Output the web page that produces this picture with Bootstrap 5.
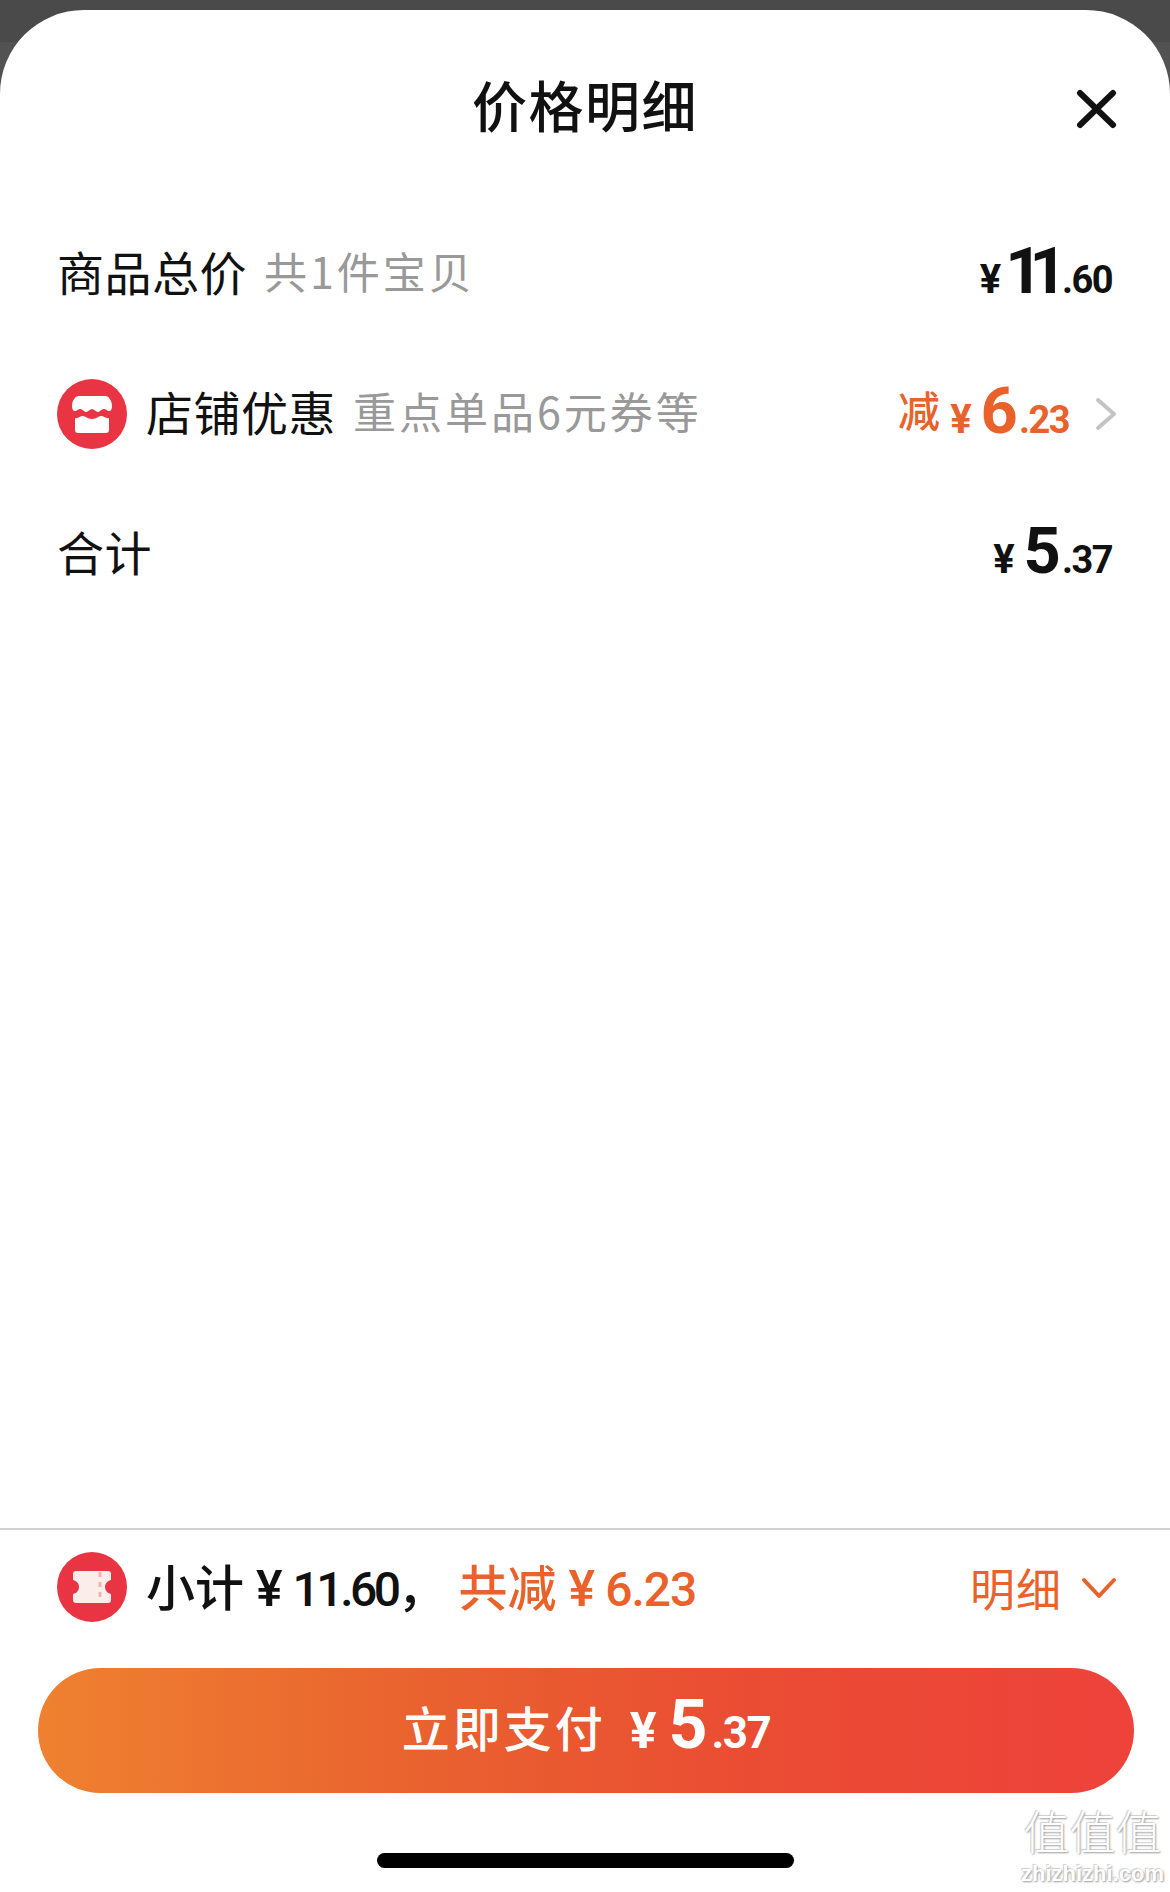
<!DOCTYPE html>
<html lang="zh-CN">
<head>
  <meta charset="UTF-8" />
  <meta name="viewport" content="width=device-width, initial-scale=1.0"/>
  <title>价格明细</title>
  <link href="https://cdn.jsdelivr.net/npm/bootstrap@5.3.3/dist/css/bootstrap.min.css" rel="stylesheet">
  <style>
    html, body { height: 100%; }
    body {
      margin: 0;
      padding-top: 10px;
      background: linear-gradient(#4a4a4a 42px, #525252 42px);
      font-family: "Noto Sans CJK SC", "Liberation Sans", sans-serif;
      color: #111;
      overflow: hidden;
    }
    .sheet {
      position: relative;
      height: 1882px;
      background: #fff;
      border-radius: 84px 84px 0 0 / 84px 84px 0 0;
    }
    .sheet-head { height: 194px; padding-top: 50px; }
    .sheet-title { font-size: 55px; font-weight: 500; line-height: 86px; margin: 0; letter-spacing: 1.5px; }
    .close-x { position: absolute; top: 78px; right: 52px; width: 42px; height: 42px; }
    .price-row { height: 140px; padding: 0 58px 0 57px; font-size: 47px; line-height: 1; }
    .price-row .label { letter-spacing: .5px; padding-bottom: 7px; }
    .hint { color: #999; margin-left: 17px; font-size: 43px; letter-spacing: 3px; padding-bottom: 7px; }
    .round-icon { width: 70px; height: 70px; flex: none; margin-right: 19px; }
    .amount { font-family: Roboto, "Noto Sans CJK SC", sans-serif; font-weight: 700; display: flex; align-items: baseline; padding-bottom: 5px; }
    .yen { font-size: 40px; margin-right: 4px; }
    .yen-wide { margin-right: 9px; }
    .big { font-size: 65px; letter-spacing: -13px; margin-right: 8px; line-height: 1; }
    .single { letter-spacing: 0; margin-right: 1px; }
    .cents { font-size: 38px; letter-spacing: -1.5px; }
    .cut { color: #e9622b; }
    .cut-word { font-family: "Noto Sans CJK SC", sans-serif; font-size: 42px; margin-right: 10px; font-weight: 500; transform: translateY(-6px); }
    .chev { width: 24px; height: 36px; margin: 0 -6px 0 25px; }
    .foot-bar { border-top: 2px solid #d2d2d2; padding: 22px 58px 0 57px; height: 140px; }
    .foot-text { font-size: 49px; font-weight: 500; line-height: 1; }
    .foot-word { padding-bottom: 1px; }
    .foot-saved { margin-left: 12px; }
    .foot-yen { font-family: Roboto, sans-serif; font-size: 50px; margin: 0 10px 0 12px; }
    .num { font-family: Roboto, sans-serif; font-size: 48px; letter-spacing: -1px; }
    .num-tight { letter-spacing: -3.5px; }
    .detail-link { color: #e9622b; font-size: 45px; letter-spacing: 1px; padding-top: 2px; }
    .detail-link svg { width: 36px; height: 24px; margin: 0 -5px 0 19px; }
    .pay-btn {
      display: flex;
      width: 1096px;
      height: 125px;
      margin-left: 38px;
      border: 0;
      border-radius: 63px;
      background: linear-gradient(90deg, #ef8130 0%, #e9622f 35%, #ea4c33 65%, #ee423b 100%);
      color: #fff;
    }
    .pay-word { font-size: 48px; font-weight: 500; letter-spacing: 3px; margin-right: 24px; padding-bottom: 9px; }
    .pay-btn .yen { font-size: 50px; margin-right: 12px; }
    .pay-btn .big { font-size: 68px; letter-spacing: 0; margin-right: 4px; }
    .pay-btn .cents { font-size: 44px; }
    .pay-btn .amount { padding-bottom: 2px; }
    .home-bar { width: 417px; height: 15px; margin: 60px auto 0; background: #000; border-radius: 8px; }
    .wm { position: absolute; right: 6px; bottom: 7px; text-align: center; color: #fff; line-height: 1; text-shadow: 1px 1px 2px #9a9a9a, -1px -1px 1px #cfcfcf; }
    .wm-top { font-size: 46px; font-weight: 300; }
    .wm-url { font-family: "Liberation Sans", sans-serif; font-size: 22px; font-weight: 700; margin-top: 11px; }
  </style>
</head>
<body>
  <div class="sheet d-flex flex-column">
    <!-- title -->
    <header class="sheet-head text-center">
      <h1 class="sheet-title">价格明细</h1>
      <svg class="close-x" viewBox="0 0 42 42" fill="none" stroke="#111" stroke-width="6" stroke-linecap="round"><path d="M4 5 37 37M37 5 4 37"/></svg>
    </header>

    <!-- price lines -->
    <div class="price-row d-flex align-items-center justify-content-between">
      <div class="d-flex align-items-center"><span class="label">商品总价</span><span class="hint">共1件宝贝</span></div>
      <div class="amount"><span class="yen">¥</span><span class="big">11</span><span class="cents">.60</span></div>
    </div>

    <div class="price-row d-flex align-items-center justify-content-between">
      <div class="d-flex align-items-center">
        <svg class="round-icon" viewBox="0 0 70 70">
          <circle cx="35" cy="35" r="35" fill="#e93443"/>
          <path d="M22 17h26c4 0 7 5 7 10 0 3-1 5-3 5-2 0-3-2-5-2-3 0-4 3-6 3s-4-3-6-3-4 3-6 3-3-3-6-3c-2 0-3 2-5 2-2 0-3-2-3-5 0-5 3-10 7-10z" fill="#fff"/>
          <path d="M18 39c3 1 5-2 8-2s4 3 9 3 6-3 9-3 5 3 8 2v12a3 3 0 0 1-3 3H21a3 3 0 0 1-3-3z" fill="#fff"/>
        </svg>
        <span class="label">店铺优惠</span><span class="hint">重点单品6元券等</span>
      </div>
      <div class="d-flex align-items-center">
        <div class="amount cut"><span class="cut-word">减</span><span class="yen yen-wide">¥</span><span class="big single">6</span><span class="cents">.23</span></div>
        <svg class="chev" viewBox="0 0 24 36" fill="none" stroke="#c4c4c4" stroke-width="4" stroke-linecap="round" stroke-linejoin="round"><path d="M4 4 20 18 4 32"/></svg>
      </div>
    </div>

    <div class="price-row d-flex align-items-center justify-content-between">
      <span class="label">合计</span>
      <div class="amount"><span class="yen yen-wide">¥</span><span class="big single">5</span><span class="cents">.37</span></div>
    </div>

    <!-- footer -->
    <div class="mt-auto">
      <div class="foot-bar d-flex align-items-start justify-content-between">
        <div class="d-flex align-items-center foot-text">
          <svg class="round-icon" viewBox="0 0 70 70">
            <circle cx="35" cy="35" r="35" fill="#e93443"/>
            <path d="M19 19h32a3 3 0 0 1 3 3v6c-4 1-6 4-6 7s2 6 6 7v6a3 3 0 0 1-3 3H19a3 3 0 0 1-3-3v-6c4-1 6-4 6-7s-2-6-6-7v-6a3 3 0 0 1 3-3z" fill="#fbeeea"/>
            <path d="M43 20v30" stroke="#efb5ad" stroke-width="3" stroke-dasharray="5 5"/>
          </svg>
          <span class="foot-word">小计<span class="foot-yen">¥</span><span class="num num-tight">11.60</span>，</span>
          <span class="foot-word foot-saved cut">共减<span class="foot-yen">¥</span><span class="num">6.23</span></span>
        </div>
        <div class="detail-link d-flex align-items-center">明细
          <svg viewBox="0 0 36 24" fill="none" stroke="#e9622b" stroke-width="4" stroke-linecap="round" stroke-linejoin="round"><path d="M3 4 18 20 33 4"/></svg>
        </div>
      </div>

      <button type="button" class="pay-btn btn align-items-center justify-content-center">
        <span class="pay-word">立即支付</span>
        <span class="amount"><span class="yen">¥</span><span class="big">5</span><span class="cents">.37</span></span>
      </button>

      <div class="home-bar"></div>
      <div style="height:24px"></div>
    </div>

    <div class="wm">
      <div class="wm-top">值值值</div>
      <div class="wm-url">zhizhizhi.com</div>
    </div>
  </div>

  <script src="https://cdn.jsdelivr.net/npm/bootstrap@5.3.3/dist/js/bootstrap.bundle.min.js"></script>
</body>
</html>
